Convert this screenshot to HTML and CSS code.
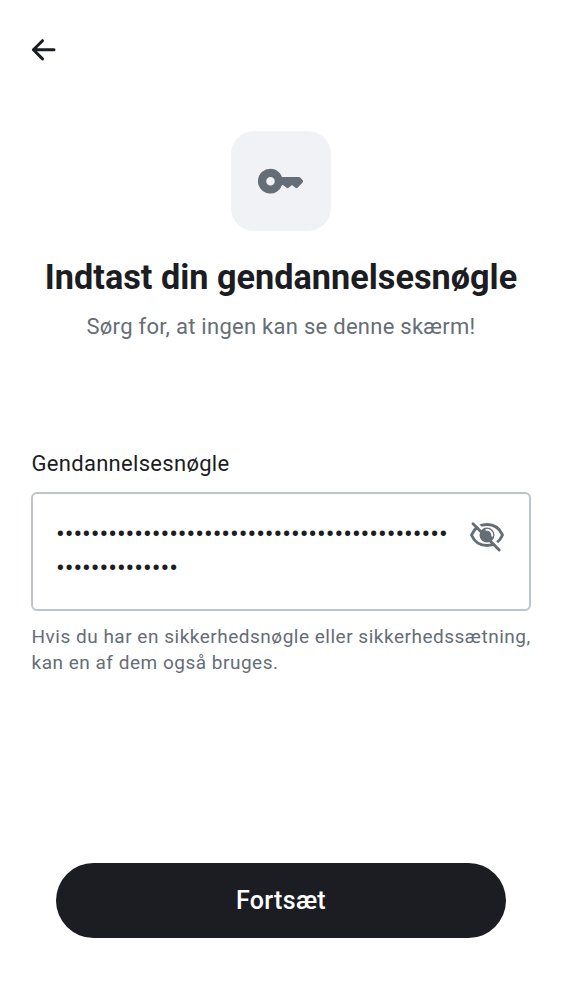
FILE: index.html
```
<!DOCTYPE html>
<html lang="da">
<head>
<meta charset="utf-8">
<title>Gendannelsesnøgle</title>
<link rel="stylesheet" href="styles.css">
</head>
<body>
<main class="screen">
  <header class="topbar">
    <svg class="back" viewBox="0 0 30 30"><path d="M14.5 5.700 5.400 14.800l9.100 9.100M5.400 14.800H26"/></svg>
  </header>
  <section class="hero">
    <div class="tile">
      <svg class="key" viewBox="0 0 50 50"><path fill-rule="evenodd" d="M14.500 12.700c4.900 0 9.700 3.200 11.500 8.200h16.800c.6 0 1 .2 1.400.6l2.300 2.500c.8.8.8 1.600.1 2.400L41.800 31.600c-.9 1-1.800 1-2.700 0L36 29l-3.100 2.600c-.9 1-1.800 1-2.700 0L27 29h-.9A12.400 12.400 0 1 1 14.500 12.700M14.500 20.900a4.300 4.300 0 1 0 0 8.600 4.300 4.300 0 0 0 0-8.600"/></svg>
    </div>
    <h1 class="title">Indtast din gendannelsesnøgle</h1>
    <p class="subtitle">Sørg for, at ingen kan se denne skærm!</p>
  </section>
  <section class="form">
    <label class="label">Gendannelsesnøgle</label>
    <div class="field">
      <div class="value"><div>•••••••••••••••••••••••••••••••••••••••••••••</div><div>••••••••••••••</div></div>
      <svg class="eye" viewBox="0 0 37 37">
        <path class="line" d="M2.500 18C5.200 11.500 11 7.500 18 7.500S30.800 11.500 33.500 18C30.800 24.500 25 28.500 18 28.500S5.200 24.500 2.500 18Z"/>
        <path class="gap" d="M5 4 34 33.100"/>
        <circle class="iris" cx="18" cy="18" r="7.500"/>
        <path class="glint" d="M16.500 13a5.200 5.200 0 0 1 6.500 6.500"/>
        <path class="line slash" d="M4 6.700 30.200 33"/>
      </svg>
    </div>
    <p class="help">Hvis du har en sikkerhedsnøgle eller sikkerhedssætning,<br>kan en af dem også bruges.</p>
  </section>
  <button class="continue">Fortsæt</button>
</main>
</body>
</html>
```
FILE: styles.css
```
* { box-sizing: border-box; }
body { margin: 0; background: #fff; color: #1b1d22; font-family: Roboto, sans-serif; }
.screen { height: 1000px; display: flex; flex-direction: column; padding: 0 31px 62.5px; }
.topbar { height: 131px; padding-top: 35px; margin-left: -3px; }
.back { width: 30px; height: 30px; display: block; fill: none; stroke: #1b1d22; stroke-width: 3; stroke-linecap: round; stroke-linejoin: round; }
.hero { display: flex; flex-direction: column; align-items: center; height: 318px; }
.tile { width: 100px; height: 100px; border-radius: 23px; background: #f0f2f5; display: flex; align-items: center; justify-content: center; }
.key { width: 50px; height: 50px; fill: #656d77; }
.title { margin: 26px 0 0; font-size: 34.25px; line-height: 40px; font-weight: 700; white-space: nowrap; }
.subtitle { margin: 15px 0 0; font-size: 22px; line-height: 30px; letter-spacing: 0.27px; color: #656d77; white-space: nowrap; }
.form { display: flex; flex-direction: column; }
.label { font-size: 22px; line-height: 30px; letter-spacing: 0.3px; padding-left: 0.5px; }
.field { margin-top: 13px; height: 119px; border: 2px solid #bdc4cc; border-radius: 6px; display: flex; justify-content: space-between; padding: 23px 23px 0; }
.value { font-size: 26px; line-height: 34px; letter-spacing: -0.07px; white-space: nowrap; }
.eye { width: 37px; height: 37px; }
.line { fill: none; stroke: #656d77; stroke-width: 2.9; stroke-linejoin: round; }
.slash { stroke-linecap: round; }
.gap { stroke: #fff; stroke-width: 2.8; }
.iris { fill: #656d77; }
.glint { fill: none; stroke: #fff; stroke-width: 1.8; }
.help { margin: 13px 0 0; font-size: 19px; line-height: 26px; letter-spacing: 0.51px; padding-left: 0.5px; color: #656d77; white-space: nowrap; }
.continue { margin: auto 25px 0; height: 75px; border: 0; border-radius: 38px; background: #1b1d22; color: #fff; font: 500 25px/34px Roboto, sans-serif; letter-spacing: 0.3px; padding-top: 2px; }
```
